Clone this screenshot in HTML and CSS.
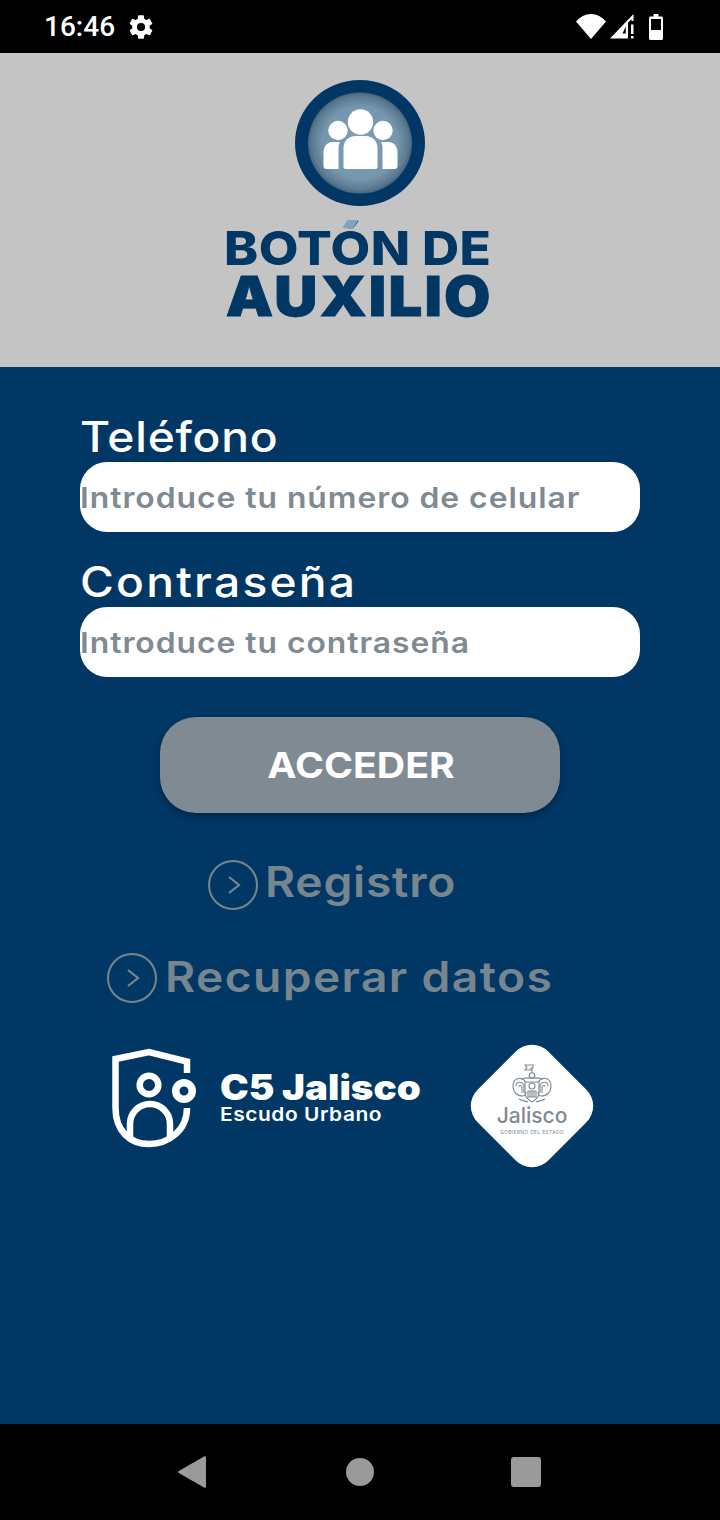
FILE: index.html
```html
<!DOCTYPE html>
<html lang="es">
<head>
<meta charset="utf-8">
<title>Botón de Auxilio</title>
<link rel="stylesheet" href="styles.css">
</head>
<body>
<div class="app">
  <div class="status">
    <span class="time">16:46</span>
    <svg class="gear" viewBox="0 0 24 24"><path fill="#fff" d="M19.4 13c.04-.33.07-.66.07-1s-.03-.67-.07-1l2.1-1.65c.2-.15.25-.42.12-.64l-2-3.46c-.12-.22-.39-.3-.61-.22l-2.49 1c-.52-.4-1.08-.73-1.69-.98l-.38-2.65A.49.49 0 0 0 14 2h-4c-.25 0-.46.18-.49.42l-.38 2.65c-.61.25-1.17.59-1.69.98l-2.49-1c-.23-.09-.49 0-.61.22l-2 3.46c-.13.22-.07.49.12.64L4.57 11c-.04.33-.07.67-.07 1s.03.67.07 1l-2.11 1.65c-.19.15-.24.42-.12.64l2 3.46c.12.22.39.3.61.22l2.49-1c.52.4 1.08.73 1.69.98l.38 2.65c.03.24.24.42.49.42h4c.25 0 .46-.18.49-.42l.38-2.65c.61-.25 1.17-.59 1.69-.98l2.49 1c.23.09.49 0 .61-.22l2-3.46c.12-.22.07-.49-.12-.64L19.4 13zM12 15.5a3.5 3.5 0 1 1 0-7 3.500 3.500 0 0 1 0 7z"/></svg>
    <span class="status-gap"></span>
    <svg class="wifi" viewBox="0 0 30 25"><path fill="#fff" d="M15 25 0 7.500C4 3 9 0 15 0s11 3 15 7.500z"/></svg>
    <svg class="signal" viewBox="0 0 24 25"><path fill="#fff" fill-rule="evenodd" d="M0 24.500 23.500 0v7h-2V5L18 8.700V24.500zM12.500 19.500H15.800V12.500z"/><rect x="21" y="10.500" width="2.500" height="9.500" fill="#fff"/><rect x="21" y="22" width="2.500" height="2.500" fill="#fff"/></svg>
    <svg class="battery" viewBox="0 0 14 26"><path fill="#fff" d="M4.500 0h5v2.500h3c.8 0 1.500.7 1.500 1.500v20.500c0 .8-.7 1.500-1.500 1.500h-11C.7 26 0 25.300 0 24.500V4c0-.8.7-1.500 1.500-1.500h3z"/><rect x="2" y="5" width="10" height="11" fill="#000"/></svg>
  </div>

  <header class="hero">
    <svg class="emblem" viewBox="0 0 130 126">
      <defs>
        <radialGradient id="orb" cx="50%" cy="50%" r="50%">
          <stop offset="0" stop-color="#7f9fb6"/>
          <stop offset=".72" stop-color="#7596ad"/>
          <stop offset=".92" stop-color="#5c7b93"/>
          <stop offset="1" stop-color="#48677f"/>
        </radialGradient>
      </defs>
      <ellipse cx="65" cy="63" rx="65" ry="63" fill="#003764"/>
      <ellipse cx="65" cy="63" rx="52" ry="50.500" fill="url(#orb)"/>
      <g fill="#fff">
        <circle cx="65.500" cy="42" r="12.700"/>
        <circle cx="43" cy="50.500" r="9.700"/>
        <circle cx="88" cy="50.500" r="9.700"/>
        <path d="M48.500 87V68c0-7 5-12 12-12h10c7 0 12 5 12 12v19c0 1-1 2-2 2H50.500c-1 0-2-1-2-2z"/>
        <path d="M28.500 86V73c0-6 3-11 9-11h7.500c-1 2-1.500 4-1.500 7v20H31.500c-2 0-3-1-3-3z"/>
        <path d="M102.500 86V73c0-6-3-11-9-11H86c1 2 1.500 4 1.500 7v20h12c2 0 3-1 3-3z"/>
      </g>
    </svg>
    <div class="brand">
      <div class="brand-top">BOT<span class="o-accent">Ó</span>N DE</div>
      <div class="brand-bottom">AUXILIO</div>
    </div>
  </header>

  <main class="login">
    <div class="field-label">Teléfono</div>
    <div class="field"><span>Introduce tu número de celular</span></div>
    <div class="field-label second">Contraseña</div>
    <div class="field"><span>Introduce tu contraseña</span></div>
    <div class="submit"><span>ACCEDER</span></div>

    <div class="link link-first">
      <svg class="chev" viewBox="0 0 50 50"><circle cx="25" cy="25" r="24" fill="none" stroke="#77858f" stroke-width="2"/><path d="M21 17l10 8-10 8" fill="none" stroke="#77858f" stroke-width="2.200"/></svg>
      <span>Registro</span>
    </div>
    <div class="link link-second">
      <svg class="chev" viewBox="0 0 50 50"><circle cx="25" cy="25" r="24" fill="none" stroke="#77858f" stroke-width="2"/><path d="M21 17l10 8-10 8" fill="none" stroke="#77858f" stroke-width="2.200"/></svg>
      <span>Recuperar datos</span>
    </div>

    <div class="partners">
      <div class="c5">
        <svg class="shield" viewBox="0 0 90 105">
          <g fill="none" stroke="#fff">
            <path stroke-width="6.500" d="M79 27V15.500L41 6 7.500 13V62C7.500 85 22 98 41 98 60 98 79 85 79 62"/>
            <circle cx="41" cy="39" r="9.300" stroke-width="6.500"/>
            <path stroke-width="6.500" d="M22 92V78a20 20 0 0 1 40 0V92"/>
            <circle cx="76" cy="45" r="8.250" stroke-width="7.500"/>
          </g>
        </svg>
        <div class="c5-text">
          <div class="c5-name">C5 Jalisco</div>
          <div class="c5-sub">Escudo Urbano</div>
        </div>
      </div>
      <div class="gov">
        <div class="gov-inner">
          <svg class="crest" viewBox="0 0 40 40">
            <g fill="none" stroke="#7f8a92" stroke-width="1.100">
              <path d="M13 1h8v3h-2v2h-6l2-2.500z"/>
              <path d="M20 4v5"/>
              <circle cx="20" cy="11.500" r="2.800"/>
              <path d="M9 15c4-1.500 18-1.500 22 0"/>
              <path d="M14 18c-6-7-13-3-13 4 0 6 4 10 10 10 2 0 3-2 3-4"/>
              <path d="M26 18c6-7 13-3 13 4 0 6-4 10-10 10-2 0-3-2-3-4"/>
              <path d="M4 22c0-5 7-5 8 0v7M7 23c0-2 2-2 3 0v6"/>
              <path d="M36 22c0-5-7-5-8 0v7M33 23c0-2-2-2-3 0v6"/>
              <path d="M13 18h14v11c0 5-4 7-7 9-3-2-7-4-7-9z"/>
              <circle cx="20" cy="22" r="3"/>
              <path d="M16 27h8v6h-8zM18 27v6M20 27v6M22 27v6"/>
              <path d="M7 35c3 2 7 2 9 3M33 35c-3 2-7 2-9 3"/>
            </g>
          </svg>
          <div class="gov-name">Jalisco</div>
          <div class="gov-sub">GOBIERNO DEL ESTADO</div>
        </div>
      </div>
    </div>
  </main>

  <nav class="navbar">
    <svg class="nav-back" viewBox="0 0 28 32"><path fill="#9a9a9a" d="M0.800 15L26 .4c1-.5 2 .1 2 1.100v29c0 1-1 1.600-2 1.100L.8 17c-1-.5-1-1.500 0-2z"/></svg>
    <span class="nav-home"></span>
    <span class="nav-recent"></span>
  </nav>
</div>
</body>
</html>
```
FILE: styles.css
```css
* { box-sizing: border-box; }
html, body { margin: 0; padding: 0; }
body { width: 720px; height: 1520px; overflow: hidden; font-family: "Inter", "Liberation Sans", sans-serif; }
.app { display: flex; flex-direction: column; width: 720px; height: 1520px; background: #003764; }

.status { display: flex; align-items: center; height: 53px; flex: none; background: #000; padding: 0 57px 0 44px; }
.time { font-family: "Roboto", sans-serif; font-size: 28px; font-weight: 500; color: #fff; line-height: 53px; }
.gear { width: 28px; height: 28px; margin-left: 12px; }
.status-gap { flex: 1; }
.wifi { width: 30px; height: 25px; }
.signal { width: 24px; height: 25px; margin-left: 4px; }
.battery { width: 14px; height: 26px; margin-left: 15px; }

.hero { flex: none; height: 314px; background: #c4c4c4; display: flex; flex-direction: column; align-items: center; padding-top: 27px; }
.emblem { width: 130px; height: 126px; display: block; }
.brand { color: #003764; text-align: center; margin: 19px 5px 0 0; font-family: "Inter", sans-serif; font-weight: 800; }
.brand-top { font-size: 47px; line-height: 46px; letter-spacing: 0.3px; transform: scaleX(1.095); }
.brand-bottom { font-size: 55px; line-height: 50px; font-weight: 900; letter-spacing: 2px; transform: translateX(1.5px) scaleX(1.087); -webkit-text-stroke: .8px #003764; }
.o-accent { position: relative; }
.o-accent::after { content: ""; position: absolute; left: 13px; top: 1px; width: 10px; height: 8px; background: #82a3ba; transform: skewX(-30deg); }

.login { flex: 1; padding: 44px 80px 0; display: flex; flex-direction: column; }
.field-label { font-size: 42px; font-weight: 500; color: #fff; line-height: 51px; letter-spacing: .7px; transform: scaleX(1.1); transform-origin: left center; white-space: nowrap; }
.field-label.second { margin-top: 24px; letter-spacing: 2px; }
.field { height: 70px; border-radius: 27px; background: #fff; color: #7f8a92; font-size: 29px; font-weight: 600; line-height: 71px; letter-spacing: .85px; white-space: nowrap; }
.field span { display: inline-block; transform: scaleX(1.1); transform-origin: left center; }
.submit { align-self: center; width: 400px; height: 96px; margin-top: 40px; padding-left: 2px; border-radius: 36px; background: #7f8a92; color: #fff; font-size: 36px; font-weight: 700; text-align: center; line-height: 96px; box-shadow: 0 3px 6px rgba(0,0,0,.3); }
.submit span { display: inline-block; transform: scaleX(1.09); }
.link { display: flex; align-items: center; color: #77858f; font-size: 42px; font-weight: 600; white-space: nowrap; }
.link span { transform: scaleX(1.1); transform-origin: left center; }
.link-first { margin: 47px 0 0 128px; height: 50px; letter-spacing: .7px; }
.link-first span { padding-bottom: 7px; }
.link-second { margin: 43px 0 0 27px; height: 50px; letter-spacing: 1.27px; }
.link-second span { padding-bottom: 4px; margin-left: 1px; }
.chev { width: 50px; height: 50px; flex: none; margin-right: 7px; }

.partners { display: flex; align-items: flex-start; margin: 43px 0 0 28px; }
.c5 { display: flex; align-items: center; width: 360px; flex: none; }
.shield { width: 90px; height: 105px; flex: none; }
.c5-text { margin: -3px 0 0 22px; color: #fff; white-space: nowrap; transform: scaleX(1.1); transform-origin: left center; }
.c5-name { font-size: 35px; font-weight: 900; line-height: 36px; }
.c5-sub { font-size: 19px; font-weight: 600; line-height: 20px; letter-spacing: .5px; }
.gov { width: 100px; height: 100px; border-radius: 23px; background: #fff; transform: rotate(45deg); margin: 10px 0 0 14px; display: flex; align-items: center; justify-content: center; flex: none; }
.gov-inner { transform: rotate(-45deg) translateY(-6px); display: flex; flex-direction: column; align-items: center; width: 110px; flex: none; }
.crest { width: 40px; height: 40px; }
.gov-name { color: #7f8a92; font-size: 21px; font-weight: 500; line-height: 24px; }
.gov-sub { color: #7f8a92; font-size: 5px; letter-spacing: .3px; line-height: 8px; white-space: nowrap; }

.navbar { flex: none; height: 96px; background: #000; display: flex; align-items: center; padding-left: 178px; }
.nav-back { width: 28px; height: 32px; }
.nav-home { width: 28px; height: 28px; border-radius: 50%; background: #9a9a9a; margin-left: 140px; }
.nav-recent { width: 30px; height: 30px; border-radius: 3px; background: #9a9a9a; margin-left: 137px; }
```
